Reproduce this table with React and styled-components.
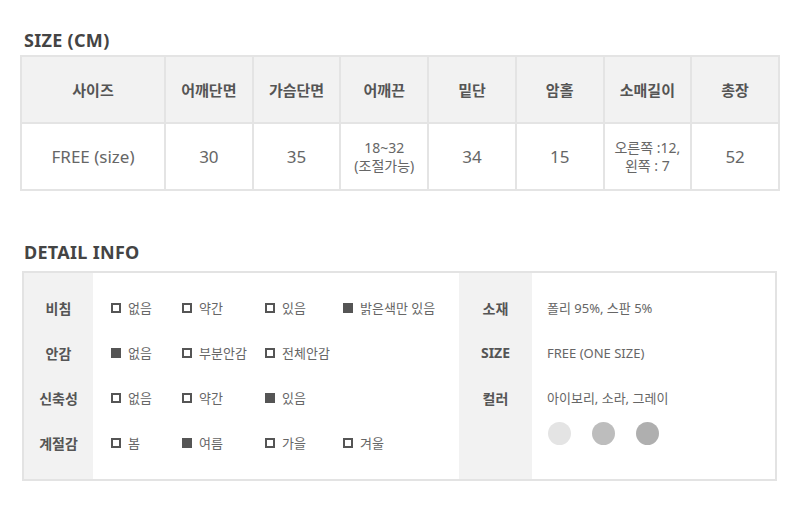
import React from "react";
import styled, { createGlobalStyle } from "styled-components";

const GlobalStyle = createGlobalStyle`
  body {
    margin: 0;
    background: #fff;
    font-family: "Noto Sans", "Noto Sans CJK KR", sans-serif;
  }
`;

const Page = styled.div`
  width: 800px;
  padding: 30px 20px 0 20px;
  box-sizing: border-box;
`;

const Title = styled.h2`
  margin: 0 0 0 4px;
  font-size: 18px;
  line-height: 20px;
  font-weight: 700;
  color: #444;
  letter-spacing: 0.3px;
`;

const SizeTable = styled.table`
  width: 760px;
  margin-top: 5px;
  border-collapse: collapse;
  table-layout: fixed;
  font-family: "Noto Sans", "Noto Sans CJK KR", sans-serif;
`;

const Th = styled.th`
  height: 65px;
  background: #f2f2f2;
  border: 2px solid #e4e4e4;
  font-size: 15px;
  font-weight: 700;
  color: #555;
  text-align: center;
  padding: 0;
`;

const Td = styled.td`
  height: 65px;
  border: 2px solid #e4e4e4;
  font-size: ${(p) => (p.$small ? "14px" : "17px")};
  line-height: ${(p) => (p.$small ? "18px" : "20px")};
  color: #666;
  text-align: center;
  padding: 0;
`;

const DetailTitle = styled(Title)`
  margin-top: 51px;
  margin-left: 4px;
`;

const DetailBox = styled.div`
  width: 755px;
  margin: 9px 0 0 2px;
  border: 2px solid #e3e3e3;
  box-sizing: border-box;
  display: grid;
  grid-template-columns: 69px 366px 73px 1fr;
`;

const LabelCol = styled.div`
  background: #f2f2f2;
  padding: 12px 0 14px;
  display: flex;
  flex-direction: column;
`;

const Label = styled.div`
  height: 45px;
  display: flex;
  align-items: center;
  justify-content: center;
  font-size: 14px;
  font-weight: 700;
  color: #555;
`;

const ValueCol = styled.div`
  padding: 12px 0 14px;
  display: flex;
  flex-direction: column;
`;

const CheckRow = styled.div`
  height: 45px;
  padding-left: 18px;
  display: grid;
  grid-template-columns: 71px 83px 78px auto;
  align-items: center;
`;

const Option = styled.span`
  display: flex;
  align-items: center;
  gap: 7px;
  font-size: 13px;
  color: #666;
  white-space: nowrap;
`;

const Box = styled.span`
  width: 10px;
  height: 10px;
  box-sizing: border-box;
  border: 2px solid #555;
  background: ${(p) => (p.$on ? "#555" : "#fff")};
  flex-shrink: 0;
`;

const InfoRow = styled.div`
  min-height: 45px;
  padding-left: 15px;
  display: flex;
  flex-direction: column;
  justify-content: flex-start;
`;

const InfoText = styled.div`
  height: 45px;
  display: flex;
  align-items: center;
  font-size: 13px;
  color: #666;
`;

const Swatches = styled.div`
  display: flex;
  gap: 21px;
  margin-top: 2px;
  padding-left: 1px;
`;

const Swatch = styled.span`
  width: 23px;
  height: 23px;
  border-radius: 50%;
  background: ${(p) => p.$color};
`;

const headers = ["사이즈", "어깨단면", "가슴단면", "어깨끈", "밑단", "암홀", "소매길이", "총장"];

const checks = [
  { label: "비침", options: ["없음", "약간", "있음", "밝은색만 있음"], on: 3 },
  { label: "안감", options: ["없음", "부분안감", "전체안감"], on: 0 },
  { label: "신축성", options: ["없음", "약간", "있음"], on: 2 },
  { label: "계절감", options: ["봄", "여름", "가을", "겨울"], on: 1 },
];

export default function App() {
  return (
    <>
      <GlobalStyle />
      <Page>
        <Title>SIZE (CM)</Title>
        <SizeTable>
          <colgroup>
            <col style={{ width: 144 }} />
            {headers.slice(1).map((h) => (
              <col key={h} />
            ))}
          </colgroup>
          <thead>
            <tr>
              {headers.map((h) => (
                <Th key={h}>{h}</Th>
              ))}
            </tr>
          </thead>
          <tbody>
            <tr>
              <Td>FREE (size)</Td>
              <Td>30</Td>
              <Td>35</Td>
              <Td $small>
                18~32
                <br />
                (조절가능)
              </Td>
              <Td>34</Td>
              <Td>15</Td>
              <Td $small>
                오른쪽 :12,
                <br />
                왼쪽 : 7
              </Td>
              <Td>52</Td>
            </tr>
          </tbody>
        </SizeTable>

        <DetailTitle>DETAIL INFO</DetailTitle>
        <DetailBox>
          <LabelCol>
            {checks.map((c) => (
              <Label key={c.label}>{c.label}</Label>
            ))}
          </LabelCol>
          <ValueCol>
            {checks.map((c) => (
              <CheckRow key={c.label}>
                {c.options.map((o, i) => (
                  <Option key={o}>
                    <Box $on={i === c.on} />
                    {o}
                  </Option>
                ))}
              </CheckRow>
            ))}
          </ValueCol>
          <LabelCol>
            <Label>소재</Label>
            <Label>SIZE</Label>
            <Label>컬러</Label>
          </LabelCol>
          <ValueCol>
            <InfoRow>
              <InfoText>폴리 95%, 스판 5%</InfoText>
            </InfoRow>
            <InfoRow>
              <InfoText>FREE (ONE SIZE)</InfoText>
            </InfoRow>
            <InfoRow>
              <InfoText>아이보리, 소라, 그레이</InfoText>
              <Swatches>
                <Swatch $color="#e4e4e4" />
                <Swatch $color="#bdbdbd" />
                <Swatch $color="#afafaf" />
              </Swatches>
            </InfoRow>
          </ValueCol>
        </DetailBox>
      </Page>
    </>
  );
}
